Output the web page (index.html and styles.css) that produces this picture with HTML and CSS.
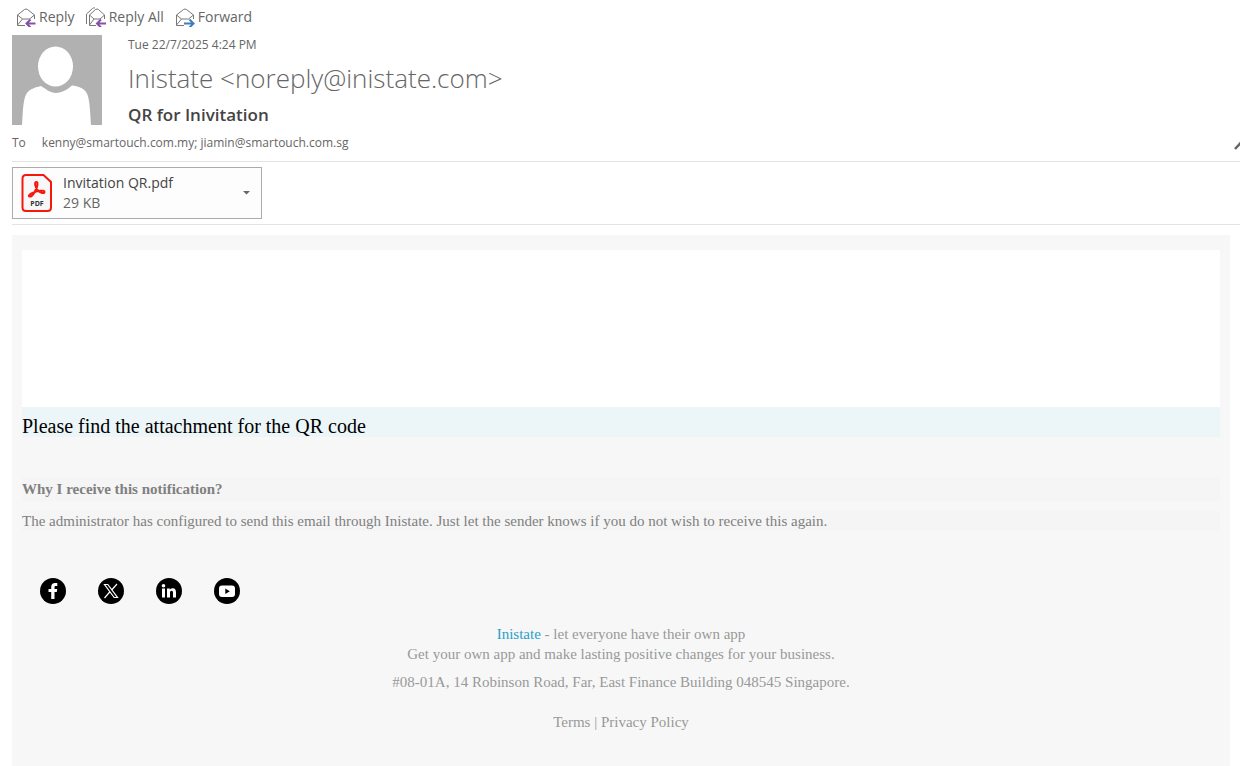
FILE: index.html
```html
<!DOCTYPE html>
<html lang="en">
<head>
  <meta charset="UTF-8">
  <meta name="viewport" content="width=device-width, initial-scale=1.0">
  <title>QR for Inivitation</title>
  <link rel="stylesheet" href="styles.css">
</head>
<body>
  <div class="toolbar">
    <button type="button" class="action">
      <svg width="20" height="20" viewBox="0 0 20 20" fill="none" stroke="#777" stroke-width="1">
        <path d="M9 18.500H1.500V8L8.500 2.500Q10 1.500 11.500 2.500L18.500 8V12M1.500 8L6.500 12H13.500L18.500 8M1.500 18L6.500 12" />
        <path d="M19.500 16.500H11M14.500 12.500L10.500 16.500L14.500 20.500" stroke="#8550a8" stroke-width="2" />
      </svg>
      Reply
    </button>
    <button type="button" class="action">
      <svg width="20" height="20" viewBox="0 0 20 20" fill="none" stroke="#777" stroke-width="1">
        <path d="M10 18.500H3.500V8L9.500 2.500Q11 1.500 12.500 2.500L18.500 8V12M3.500 8L8 12H14L18.500 8M3.500 18L8 12M.5 17V7L6.500 1.500Q7.500 .5 9 1" />
        <path d="M20 16.500H11.500M15 12.500L11 16.500L15 20.500" stroke="#8550a8" stroke-width="2" />
      </svg>
      Reply All
    </button>
    <button type="button" class="action">
      <svg width="20" height="20" viewBox="0 0 20 20" fill="none" stroke="#777" stroke-width="1">
        <path d="M9 18.500H1.500V8L8.500 2.500Q10 1.500 11.500 2.500L18.500 8V12M1.500 8L6.500 12H13.500L18.500 8M1.500 18L6.500 12" />
        <path d="M9 16.500H18M14.500 12.500L18.500 16.500L14.500 20.500" stroke="#3f7fbf" stroke-width="2" />
      </svg>
      Forward
    </button>
  </div>

  <header class="message-header">
    <svg class="avatar" width="90" height="90" viewBox="0 0 90 90">
      <rect width="90" height="90" fill="#b1b1b1" />
      <ellipse cx="43.500" cy="31.500" rx="17.500" ry="20" fill="#fff" />
      <path d="M10 90C11 76 11 63 15 58C18 54 24 52 29 51C34 54 38 58 44 58C50 58 56 54 60 50.500C66 51 71 53 74 57C78 62 78 77 79 90Z" fill="#fff" />
    </svg>
    <div class="message-info">
      <div class="date">Tue 22/7/2025 4:24 PM</div>
      <div class="sender">Inistate &lt;noreply@inistate.com&gt;</div>
      <h1 class="subject">QR for Inivitation</h1>
    </div>
  </header>

  <div class="recipients">
    <span class="to">To</span>
    <span class="addresses">kenny@smartouch.com.my; jiamin@smartouch.com.sg</span>
    <button type="button" class="collapse" aria-label="Collapse">
      <svg width="12" height="14" viewBox="0 0 12 14" fill="none" stroke="#666" stroke-width="2.500">
        <path d="M1 13L7 6.500L13 13" />
      </svg>
    </button>
  </div>

  <div class="attachments">
    <button type="button" class="attachment">
      <svg width="32" height="38" viewBox="0 0 32 38">
        <path d="M5 1H22.500L30 8V33.500Q30 37 26.500 37H5Q1.500 37 1.500 33.500V4.500Q1.500 1 5 1Z" fill="#f8f8f8" stroke="#f5190d" stroke-width="2" />
        <path d="M15.500 8C13 8 14 13 17 16.500C19.500 19 23.500 20 23.500 18C23.500 15.500 16 17 12.500 18.500C8.500 20 7 22 8.500 22.500C11.500 23.500 16.500 14 16.500 10C16.500 8.500 16 8 15.500 8Z" fill="none" stroke="#f5190d" stroke-width="2" />
        <text x="16" y="32" text-anchor="middle" class="pdf-label">PDF</text>
      </svg>
      <span class="file">
        <span class="file-name">Invitation QR.pdf</span>
        <span class="file-size">29 KB</span>
      </span>
      <svg width="7" height="4" viewBox="0 0 7 4"><path d="M0 0H7L3.500 3.500Z" fill="#666" /></svg>
    </button>
  </div>

  <main class="mail-body">
    <div class="banner"></div>
    <p class="notice">Please find the attachment for the QR code</p>
    <h2 class="why">Why I receive this notification?</h2>
    <p class="reason">The administrator has configured to send this email through Inistate. Just let the sender knows if you do not wish to receive this again.</p>

    <div class="social">
      <a href="#" aria-label="Facebook">
        <svg width="26" height="26" viewBox="0 0 26 26">
          <circle cx="13" cy="13" r="13" fill="#000" />
          <path d="M11.200 21V14H8.500V11H11.200V9C11.200 6.200 12.800 5 15 5H17.300V8H15.800C14.800 8 14.500 8.500 14.500 9.400V11H17.200L16.800 14H14.500V21Z" fill="#fff" />
        </svg>
      </a>
      <a href="#" aria-label="X">
        <svg width="26" height="26" viewBox="0 0 26 26" fill="none" stroke="#fff">
          <circle cx="13" cy="13" r="13" fill="#000" stroke="none" />
          <path d="M6.500 6.500H9.800L19.500 19.500H16.200ZM19 6L13.700 12M11.700 14L6.500 20" stroke-width="1.200" />
        </svg>
      </a>
      <a href="#" aria-label="LinkedIn">
        <svg width="26" height="26" viewBox="0 0 26 26">
          <circle cx="13" cy="13" r="13" fill="#000" />
          <circle cx="7.500" cy="7.800" r="1.800" fill="#fff" />
          <path d="M6 10.500H9V19.500H6ZM11 10.500H13.800V11.800C14.500 10.800 15.500 10.300 16.800 10.300C19.300 10.300 20 12 20 14.500V19.500H17V15C17 13.800 16.800 12.800 15.600 12.800C14.300 12.800 14 13.800 14 15V19.500H11Z" fill="#fff" />
        </svg>
      </a>
      <a href="#" aria-label="YouTube">
        <svg width="26" height="26" viewBox="0 0 26 26">
          <circle cx="13" cy="13" r="13" fill="#000" />
          <rect x="5" y="7.500" width="16" height="11.500" rx="3" fill="#fff" />
          <path d="M11.300 10.500L15.800 13.200L11.300 16Z" fill="#000" />
        </svg>
      </a>
    </div>

    <footer class="footer">
      <p><a href="#" class="brand">Inistate</a> - let everyone have their own app<br>Get your own app and make lasting positive changes for your business.</p>
      <p>#08-01A, 14 Robinson Road, Far, East Finance Building 048545 Singapore.</p>
      <p class="links"><a href="#">Terms</a> | <a href="#">Privacy Policy</a></p>
    </footer>
  </main>
</body>
</html>
```

FILE: styles.css
```css
/* Base styles */
* {
  box-sizing: border-box;
}

body {
  margin: 0;
  min-height: 100vh;
  display: flex;
  flex-direction: column;
  background: #fff;
  color: #666;
  font-family: 'Segoe UI', 'Open Sans', sans-serif;
  font-size: 12px;
}

h1,
h2,
p {
  margin: 0;
}

button {
  padding: 0;
  border: none;
  background: none;
  color: inherit;
  font: inherit;
  cursor: pointer;
}

a {
  color: inherit;
  text-decoration: none;
}

svg {
  display: block;
  flex: none;
}

/* Toolbar */
.toolbar {
  display: flex;
  gap: 11px;
  padding: 6px 16px 7px;
}

.action {
  display: flex;
  align-items: center;
  gap: 3px;
  font-size: 14px;
  line-height: 22px;
}

/* Message header */
.message-header {
  display: flex;
  gap: 26px;
  padding-left: 12px;
}

.date {
  line-height: 20px;
}

.sender {
  font-size: 26px;
  font-weight: 300;
  line-height: 46px;
}

.subject {
  color: #444;
  font-size: 17px;
  font-weight: 600;
  line-height: 28px;
}

.recipients {
  display: flex;
  align-items: center;
  gap: 16px;
  height: 33px;
  margin-left: 12px;
  padding-bottom: 5px;
  border-bottom: 1px solid #e3e3e3;
}

.collapse {
  width: 6px;
  margin-left: auto;
  overflow: hidden;
}

/* Attachments */
.attachments {
  margin-left: 12px;
  padding: 5px 0;
  border-bottom: 1px solid #e3e3e3;
}

.attachment {
  display: flex;
  align-items: center;
  width: 250px;
  height: 52px;
  padding: 0 11px 0 8px;
  gap: 10px;
  border: 1px solid #ababab;
  background: #fdfdfd;
  text-align: left;
}

.file {
  display: flex;
  flex: 1;
  flex-direction: column;
  font-size: 14px;
  line-height: 20px;
}

.file-name {
  color: #444;
}

.pdf-label {
  fill: #333;
  font-size: 7px;
  font-weight: 700;
}

/* Mail body */
.mail-body {
  flex: 1;
  margin: 10px 10px 0 12px;
  padding: 15px 10px 33px;
  background: #f7f7f7;
  color: #808080;
  font-family: 'Liberation Serif', 'Times New Roman', serif;
  font-size: 15px;
  line-height: 20px;
}

.banner {
  height: 157px;
  background: #fff;
}

.notice {
  padding-top: 8px;
  background: #ecf5f8;
  color: #000;
  font-size: 20px;
  line-height: 22px;
}

.why {
  margin-top: 40px;
  background: #f5f5f5;
  font-size: 15px;
  line-height: 24px;
}

.reason {
  margin-top: 10px;
  background: #f5f5f5;
}

.social {
  display: flex;
  gap: 32px;
  padding: 47px 18px 20px;
}

.footer {
  color: #999;
  text-align: center;
}

.footer p {
  margin-bottom: 8px;
}

.footer .links {
  margin: 20px 0 0;
}

.brand {
  color: #2a9fc9;
}
```
